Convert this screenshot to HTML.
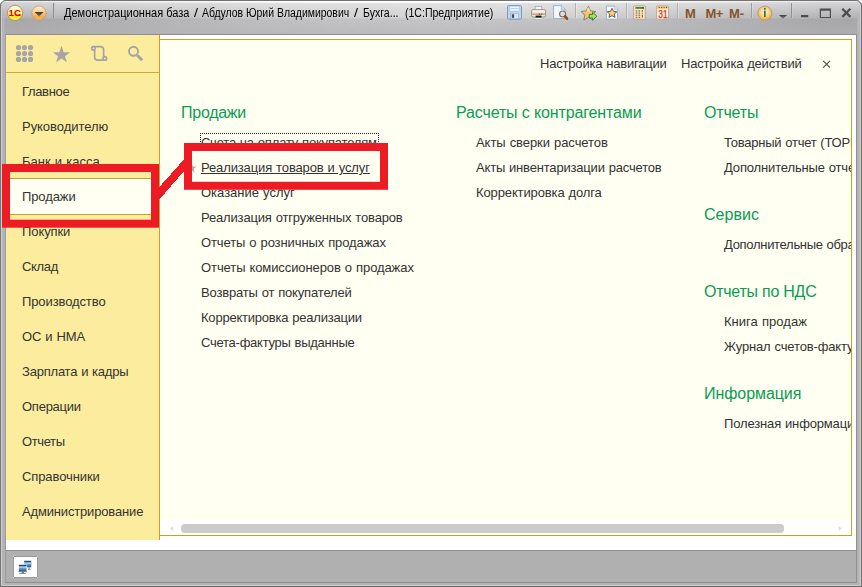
<!DOCTYPE html>
<html lang="ru">
<head>
<meta charset="utf-8">
<title>1С:Предприятие</title>
<style>
html,body{margin:0;padding:0;}
body{width:862px;height:587px;overflow:hidden;background:#fff;font-family:"Liberation Sans",sans-serif;position:relative;}
#win{position:absolute;left:0;top:0;width:862px;height:587px;overflow:hidden;background:#acacae;border-radius:6px 6px 0 0;}
#titlebar{position:absolute;left:0;top:0;width:862px;height:35px;
 background:linear-gradient(to bottom,#707072 0px,#707072 1px,#ececec 1px,#ececec 2px,#d6d6d8 2px,#b2b2b4 18px,#a7a7a9 19px,#adadaf 34px,#8e8e90 34px,#8e8e90 35px);}
#titlebar2{position:absolute;left:0;top:0;width:862px;height:35px;
 background:linear-gradient(to bottom,#7c7c7c 0px,#7c7c7c 1px,#ffffff 1px,#ffffff 3px,#e2e2e2 3px,#d3d3d3 18px,#c6c6c8 19px,#bcbcbe 34px,#8e8e90 34px,#8e8e90 35px);
 -webkit-mask-image:linear-gradient(to right,rgba(0,0,0,0) 10px,rgba(0,0,0,0.85) 300px,rgba(0,0,0,1) 450px,rgba(0,0,0,0.85) 600px,rgba(0,0,0,0) 830px);
 mask-image:linear-gradient(to right,rgba(0,0,0,0) 10px,rgba(0,0,0,0.85) 300px,rgba(0,0,0,1) 450px,rgba(0,0,0,0.85) 600px,rgba(0,0,0,0) 830px);}
.title{position:absolute;top:6px;font-size:12px;line-height:14px;color:#000;white-space:nowrap;transform-origin:0 0;}
#white{position:absolute;left:6px;top:35px;width:850px;height:515px;background:#fff;}
#side{position:absolute;left:6px;top:35px;width:153px;height:505px;background:#fcec9d;}
#sideline{position:absolute;left:6px;top:72px;width:153px;height:1px;background:#c8ad2e;}
#vline{position:absolute;left:159px;top:35px;width:1px;height:505px;background:#bfa524;}
#content{position:absolute;left:160px;top:39px;width:691px;height:495px;border:1px solid #bfa522;border-left:none;background:#fffff2;overflow:hidden;}
#clip{position:absolute;left:0;top:0;width:851px;height:520px;overflow:hidden;}
#scrollbg{position:absolute;left:160px;top:520px;width:691px;height:15px;background:#fff;}
#thumb{position:absolute;left:181px;top:524px;width:603px;height:9px;border-radius:4px;background:#cbcbcb;}
#status{position:absolute;left:6px;top:550px;width:850px;height:32px;background:#b0b0b0;border-top:1px solid #8f8f8f;box-sizing:border-box;}
.nav{position:absolute;left:22px;font-size:13px;line-height:16px;color:#343434;white-space:nowrap;word-spacing:0.5px;}
.h{position:absolute;font-size:16px;line-height:20px;color:#0a9c54;white-space:nowrap;}
.l{position:absolute;font-size:13px;line-height:16px;color:#333;white-space:nowrap;word-spacing:0.5px;}
#sel{position:absolute;left:6px;top:178px;width:153px;height:35px;background:#fffff2;border-top:1px solid #bfa522;border-bottom:1px solid #bfa522;}
.tb{position:absolute;font-weight:bold;font-size:13px;line-height:14px;color:#84532a;white-space:nowrap;}
#focus{position:absolute;left:200px;top:133px;width:177px;height:15px;border:1px dotted #222;}
/* frame edges */
.fe{position:absolute;}
svg{position:absolute;left:0;top:0;}
</style>
</head>
<body>
<div id="win">
  <div id="titlebar"></div>
  <div id="titlebar2"></div>
  <div class="title" style="left:64.2px;transform:scaleX(0.919)">Демонстрационная база</div>
  <div class="title" style="left:194.1px;transform:scaleX(1.2)">/</div>
  <div class="title" style="left:202.4px;transform:scaleX(0.870)">Абдулов Юрий Владимирович</div>
  <div class="title" style="left:354.2px;transform:scaleX(1.2)">/</div>
  <div class="title" style="left:362.6px;transform:scaleX(0.879)">Бухга...</div>
  <div class="title" style="left:405.3px;transform:scaleX(0.878)">(1С:Предприятие)</div>
  <div class="tb" style="left:685px;top:7px">M</div>
  <div class="tb" style="left:705.5px;top:7px;letter-spacing:-0.5px">M+</div>
  <div class="tb" style="left:729px;top:7px">M-</div>

  <div id="white"></div>
  <div id="side"></div>
  <div id="sideline"></div>
  <div id="sel"></div>
  <div id="vline"></div>

  <div id="content"></div>
  <div id="scrollbg"></div>
  <div id="thumb"></div>

  <!-- sidebar nav -->
  <div class="nav" style="top:84px;letter-spacing:-0.339px">Главное</div>
  <div class="nav" style="top:119px;letter-spacing:-0.045px">Руководителю</div>
  <div class="nav" style="top:154px;letter-spacing:0.013px">Банк и касса</div>
  <div class="nav" style="top:189px;letter-spacing:-0.1px">Продажи</div>
  <div class="nav" style="top:224px;letter-spacing:-0.087px">Покупки</div>
  <div class="nav" style="top:259px;letter-spacing:-0.325px">Склад</div>
  <div class="nav" style="top:294px;letter-spacing:-0.105px">Производство</div>
  <div class="nav" style="top:329px;letter-spacing:-0.109px">ОС и НМА</div>
  <div class="nav" style="top:364px;letter-spacing:-0.211px">Зарплата и кадры</div>
  <div class="nav" style="top:399px;letter-spacing:-0.252px">Операции</div>
  <div class="nav" style="top:434px;letter-spacing:-0.39px">Отчеты</div>
  <div class="nav" style="top:469px;letter-spacing:-0.097px">Справочники</div>
  <div class="nav" style="top:504px;letter-spacing:-0.163px">Администрирование</div>

  <div id="clip">
  <!-- top right commands -->
  <div class="l" style="left:540px;top:56px;letter-spacing:-0.192px">Настройка навигации</div>
  <div class="l" style="left:681px;top:56px;letter-spacing:-0.193px">Настройка действий</div>

  <!-- column 1 -->
  <div class="h" style="left:181px;top:103px;letter-spacing:-0.261px">Продажи</div>
  <div id="focus"></div>
  <div class="l" style="left:201px;top:135px;letter-spacing:-0.184px">Счета на оплату покупателям</div>
  <div class="l" style="left:201px;top:160px;text-decoration:underline;letter-spacing:-0.124px">Реализация товаров и услуг</div>
  <div class="l" style="left:201px;top:185px;letter-spacing:-0.009px">Оказание услуг</div>
  <div class="l" style="left:201px;top:210px;letter-spacing:-0.162px">Реализация отгруженных товаров</div>
  <div class="l" style="left:201px;top:235px;letter-spacing:-0.099px">Отчеты о розничных продажах</div>
  <div class="l" style="left:201px;top:260px;letter-spacing:-0.087px">Отчеты комиссионеров о продажах</div>
  <div class="l" style="left:201px;top:285px;letter-spacing:-0.17px">Возвраты от покупателей</div>
  <div class="l" style="left:201px;top:310px;letter-spacing:-0.213px">Корректировка реализации</div>
  <div class="l" style="left:201px;top:335px;letter-spacing:-0.254px">Счета-фактуры выданные</div>

  <!-- column 2 -->
  <div class="h" style="left:456px;top:103px;letter-spacing:-0.132px">Расчеты с контрагентами</div>
  <div class="l" style="left:476px;top:135px;letter-spacing:-0.057px">Акты сверки расчетов</div>
  <div class="l" style="left:476px;top:160px;letter-spacing:-0.181px">Акты инвентаризации расчетов</div>
  <div class="l" style="left:476px;top:185px;letter-spacing:-0.123px">Корректировка долга</div>

  <!-- column 3 -->
  <div class="h" style="left:704px;top:103px;letter-spacing:-0.169px">Отчеты</div>
  <div class="l" style="left:724px;top:135px;letter-spacing:-0.23px">Товарный отчет (ТОРГ-29)</div>
  <div class="l" style="left:724px;top:160px;letter-spacing:-0.15px">Дополнительные отчеты</div>
  <div class="h" style="left:704px;top:205px;letter-spacing:0.034px">Сервис</div>
  <div class="l" style="left:724px;top:237px;letter-spacing:-0.3px">Дополнительные обработки</div>
  <div class="h" style="left:704px;top:282px;letter-spacing:-0.246px">Отчеты по НДС</div>
  <div class="l" style="left:724px;top:314px;letter-spacing:0.029px">Книга продаж</div>
  <div class="l" style="left:724px;top:339px;letter-spacing:-0.15px">Журнал счетов-фактур</div>
  <div class="h" style="left:704px;top:384px;letter-spacing:-0.067px">Информация</div>
  <div class="l" style="left:724px;top:416px;letter-spacing:-0.15px">Полезная информация</div>
  </div>

  <div id="status"></div>

  <!-- frame edges -->
  <div class="fe" style="left:0;top:0;width:860px;height:12px;border:1px solid #727274;border-bottom:none;border-radius:6px 6px 0 0"></div>
  <div class="fe" style="left:0;top:0;width:1px;height:587px;background:#767676"></div>
  <div class="fe" style="left:1px;top:6px;width:1px;height:580px;background:#cfcfd1"></div>
  <div class="fe" style="left:2px;top:35px;width:3px;height:550px;background:#b4b4b6"></div>
  <div class="fe" style="left:5px;top:35px;width:1px;height:548px;background:#9a9a9e"></div>
  <div class="fe" style="left:856px;top:35px;width:1px;height:548px;background:#8e8e90"></div>
  <div class="fe" style="left:857px;top:35px;width:3px;height:550px;background:#b6b6b8"></div>
  <div class="fe" style="left:857px;top:6px;width:3px;height:29px;background:linear-gradient(to bottom,rgba(190,190,192,0),rgba(184,184,186,0.9) 14px,#b6b6b8)"></div>
  <div class="fe" style="left:2px;top:6px;width:3px;height:29px;background:linear-gradient(to bottom,rgba(190,190,192,0),rgba(184,184,186,0.6) 14px,#b4b4b6)"></div>
  <div class="fe" style="left:860px;top:6px;width:1px;height:580px;background:#cfcfd1"></div>
  <div class="fe" style="left:861px;top:0;width:1px;height:587px;background:#707070"></div>
  <div class="fe" style="left:5px;top:582px;width:852px;height:1px;background:#8e8e90"></div>
  <div class="fe" style="left:2px;top:583px;width:858px;height:2px;background:#b4b4b6"></div>
  <div class="fe" style="left:1px;top:585px;width:860px;height:1px;background:#cbcbcd"></div>
  <div class="fe" style="left:0;top:586px;width:862px;height:1px;background:#6a6a6a"></div>

  <svg width="862" height="587" viewBox="0 0 862 587">
    <defs>
      <linearGradient id="g1c" x1="0" y1="0" x2="0" y2="1">
        <stop offset="0" stop-color="#fffde6"/><stop offset="0.45" stop-color="#fff59a"/><stop offset="0.75" stop-color="#ffe818"/><stop offset="1" stop-color="#fff05a"/>
      </linearGradient>
      <linearGradient id="gor" x1="0" y1="0" x2="0" y2="1">
        <stop offset="0" stop-color="#fdf0d6"/><stop offset="0.45" stop-color="#f9cf8e"/><stop offset="0.8" stop-color="#f5a93c"/><stop offset="1" stop-color="#f9c26a"/>
      </linearGradient>
      <linearGradient id="gtri" x1="0" y1="0" x2="0" y2="1">
        <stop offset="0" stop-color="#3a3228"/><stop offset="1" stop-color="#85765e"/>
      </linearGradient>
      <radialGradient id="ginfo" cx="0.5" cy="0.42" r="0.6">
        <stop offset="0" stop-color="#fff6e2"/><stop offset="0.45" stop-color="#fbd89c"/><stop offset="1" stop-color="#f2a030"/>
      </radialGradient>
      <linearGradient id="garr" x1="0" y1="0" x2="0" y2="1">
        <stop offset="0" stop-color="#3c3c3e"/><stop offset="1" stop-color="#858587"/>
      </linearGradient>
      <linearGradient id="gmon" x1="0" y1="0" x2="0" y2="1">
        <stop offset="0" stop-color="#2f6fae"/><stop offset="0.4" stop-color="#a9cde9"/><stop offset="0.55" stop-color="#5f9bd0"/><stop offset="1" stop-color="#16559a"/>
      </linearGradient>
    </defs>
    <!-- 1C logo -->
    <circle cx="15" cy="12.9" r="7.6" fill="url(#g1c)" stroke="#b48c6c" stroke-width="0.9"/>
    <text x="8.6" y="16" font-family="Liberation Sans, sans-serif" font-weight="bold" font-size="8.6" fill="#e40000" textLength="12.4" lengthAdjust="spacingAndGlyphs">1С</text>
    <rect x="15.6" y="14.6" width="5" height="1.3" fill="#e40000"/>
    <!-- orange menu button -->
    <circle cx="38.9" cy="13" r="7.1" fill="url(#gor)" stroke="#c4a27a" stroke-width="0.9"/>
    <path d="M34.6 11.9 L43.6 11.9 L39.1 16.6 Z" fill="url(#gtri)"/>
    <!-- separators in title bar -->
    <g>
      <rect x="53" y="3" width="1" height="15" fill="#8e8e90"/><rect x="54" y="3" width="1" height="15" fill="#c8c8ca" opacity="0.6"/>
      <rect x="575" y="3" width="1" height="15" fill="#b2b2b4"/><rect x="576" y="3" width="1" height="15" fill="#f2f2f2" opacity="0.45"/>
      <rect x="626" y="3" width="1" height="15" fill="#b2b2b4"/><rect x="627" y="3" width="1" height="15" fill="#f2f2f2" opacity="0.45"/>
      <rect x="677" y="3" width="1" height="15" fill="#b0b0b2"/><rect x="678" y="3" width="1" height="15" fill="#eeeeee" opacity="0.45"/>
      <rect x="751" y="3" width="1" height="15" fill="#9d9d9f"/><rect x="752" y="3" width="1" height="15" fill="#e2e2e2" opacity="0.45"/>
      <rect x="791" y="3" width="1" height="15" fill="#919193"/><rect x="792" y="3" width="1" height="15" fill="#d4d4d4" opacity="0.45"/>
    </g>
    <!-- save (floppy) -->
    <g>
      <rect x="507.5" y="5.5" width="14" height="13.6" rx="1.2" fill="#bcd7f0" stroke="#6f93bd" stroke-width="0.9"/>
      <rect x="509.8" y="6.1" width="9.8" height="5" fill="#f0f7fd" stroke="#8fb3d9" stroke-width="0.5"/>
      <rect x="510.6" y="8.2" width="8.2" height="0.9" fill="#a9cbe6"/>
      <rect x="510.6" y="13.4" width="7.9" height="5.4" fill="#dde5ee" stroke="#8ea4be" stroke-width="0.5"/>
      <rect x="511.8" y="14.3" width="2.3" height="3.5" fill="#3e4a5c"/>
    </g>
    <!-- printer -->
    <g>
      <rect x="535.2" y="6.4" width="6.6" height="4.2" fill="#f1f6fb" stroke="#8b9fb8" stroke-width="0.7"/>
      <rect x="531.6" y="9.6" width="14" height="7.4" rx="1.6" fill="#efe4d4" stroke="#8e8276" stroke-width="0.8"/>
      <rect x="532.6" y="10.6" width="12" height="1.2" fill="#fbf8f2"/>
      <rect x="532.2" y="13.6" width="12.8" height="1.1" fill="#b58d6c"/>
      <rect x="538.8" y="13.5" width="1.3" height="1.3" fill="#e02020"/><rect x="541" y="13.5" width="1.3" height="1.3" fill="#2fa02f"/>
      <rect x="535.7" y="15.6" width="5.8" height="2.4" fill="#161616"/>
      <rect x="535.4" y="17.8" width="6.4" height="1.8" fill="#f6f6f6" stroke="#8a8a8a" stroke-width="0.4"/>
    </g>
    <!-- preview -->
    <g>
      <path d="M553.6 5.6 H561.3 L564.9 9.2 V18.6 H553.6 Z" fill="#f2f7fc" stroke="#7fa3cf" stroke-width="0.8"/>
      <path d="M561.3 5.6 V9.2 H564.9" fill="#d6e5f4" stroke="#7fa3cf" stroke-width="0.6"/>
      <circle cx="562.6" cy="14" r="3" fill="#cfe3f6" stroke="#9a643c" stroke-width="1.1"/>
      <path d="M565 16.4 L567 18.7" stroke="#8a4a22" stroke-width="2.6" stroke-linecap="round"/>
    </g>
    <!-- star with green arrow -->
    <g>
      <path d="M588.4 6.2 L590.6 10.9 L595.8 11.5 L591.9 15 L593 20.1 L588.4 17.4 L583.8 20.1 L584.9 15 L581 11.5 L586.2 10.9 Z" fill="#f8c46c" stroke="#86827c" stroke-width="1" stroke-linejoin="round"/>
      <path d="M587.2 8.6 L588.4 7.2 L589.6 8.6 L590 11.2 L586.6 11.4 Z" fill="#fde2b0" opacity="0.8"/>
      <path d="M589.2 14.4 H592.6 V12.2 L596.9 16.2 L592.6 20.2 V18 H589.2 Z" fill="#9fe074" stroke="#2c7c1e" stroke-width="0.9" stroke-linejoin="round"/>
    </g>
    <!-- star doc -->
    <g>
      <path d="M606.4 6.1 H614.4 L617.6 9.3 V19.2 H606.4 Z" fill="#f6fafe" stroke="#86a6cc" stroke-width="0.8"/>
      <path d="M614.4 6.1 V9.3 H617.6" fill="#dce9f6" stroke="#86a6cc" stroke-width="0.5"/>
      <path d="M612 8.3 L613.45 11.35 L616.8 11.75 L614.3 14 L615 17.3 L612 15.65 L609 17.3 L609.7 14 L607.2 11.75 L610.55 11.35 Z" fill="#f8d274" stroke="#55504a" stroke-width="0.9" stroke-linejoin="round"/>
    </g>
    <!-- calculator -->
    <g>
      <rect x="633.6" y="5.8" width="11.7" height="13.4" rx="0.8" fill="#fbe6bc" stroke="#a69c8c" stroke-width="0.8"/>
      <rect x="635.4" y="7" width="8.3" height="1.8" fill="#349034"/>
      <rect x="642.4" y="7" width="1.3" height="1.8" fill="#1d5c1d"/>
      <g fill="#4a4036">
        <rect x="635.7" y="10.5" width="1.6" height="0.9"/><rect x="638.5" y="10.5" width="1.6" height="0.9"/>
        <rect x="635.7" y="12.6" width="1.6" height="0.9"/><rect x="638.5" y="12.6" width="1.6" height="0.9"/><rect x="641.8" y="12.7" width="1" height="0.9"/>
        <rect x="635.7" y="14.7" width="1.6" height="0.9"/><rect x="638.5" y="14.7" width="1.6" height="0.9"/>
        <rect x="635.7" y="16.8" width="1.6" height="0.9"/><rect x="638.5" y="16.8" width="1.6" height="0.9"/>
      </g>
      <rect x="641.8" y="10" width="1" height="1.8" fill="#e03020"/>
      <rect x="641.8" y="14.6" width="1" height="3" fill="#6a5a3a"/>
    </g>
    <!-- calendar -->
    <g>
      <rect x="656.7" y="5.8" width="11.8" height="13.4" rx="0.8" fill="#fdf3dc" stroke="#a9a08e" stroke-width="0.8"/>
      <rect x="657.1" y="6.2" width="11" height="2.5" fill="#f6c068"/>
      <rect x="658.8" y="6.9" width="1" height="1" fill="#5a3e22"/><rect x="661.2" y="6.9" width="1" height="1" fill="#5a3e22"/><rect x="663.6" y="6.9" width="1" height="1" fill="#5a3e22"/><rect x="666" y="6.9" width="1" height="1" fill="#5a3e22"/>
      <text x="658.3" y="17.8" font-family="Liberation Sans, sans-serif" font-size="10" fill="#e2261a" stroke="#e2261a" stroke-width="0.25" textLength="9.3" lengthAdjust="spacingAndGlyphs">31</text>
    </g>
    <!-- info -->
    <g>
      <circle cx="764.8" cy="13.2" r="7.1" fill="url(#ginfo)" stroke="#b79a72" stroke-width="0.9"/>
      <rect x="764" y="10.6" width="1.7" height="6.4" fill="#2f7c16"/>
      <rect x="764" y="7.9" width="1.7" height="1.8" fill="#2f7c16"/>
    </g>
    <path d="M778.9 14.9 H787.1 L783 18.8 Z" fill="url(#garr)"/>
    <!-- window buttons -->
    <rect x="801" y="17.4" width="7.2" height="1" fill="#fff" opacity="0.45"/>
    <rect x="819.8" y="18.2" width="11.2" height="1" fill="#fff" opacity="0.45"/>
    <rect x="801" y="15" width="7.2" height="2.4" fill="#4e4e50"/>
    <path d="M819.8 8.5 H831 V18.2 H819.8 Z M821 10.7 V17 H829.8 V10.7 Z" fill="#4e4e50" fill-rule="evenodd"/>
    <path d="M842.3 8.8 L850.4 16.9 M850.4 8.8 L842.3 16.9" stroke="#4e4e50" stroke-width="2.3" fill="none"/>

    <!-- sidebar icons -->
    <g fill="#a6a6a7">
      <circle cx="18.5" cy="47.6" r="2.6"/><circle cx="24.5" cy="47.6" r="2.6"/><circle cx="30.5" cy="47.6" r="2.6"/>
      <circle cx="18.5" cy="53.5" r="2.6"/><circle cx="24.5" cy="53.5" r="2.6"/><circle cx="30.5" cy="53.5" r="2.6"/>
      <circle cx="18.5" cy="59.4" r="2.6"/><circle cx="24.5" cy="59.4" r="2.6"/><circle cx="30.5" cy="59.4" r="2.6"/>
      <path d="M61.5 45.8 L63.7 52.2 L70.2 52.3 L65 56.3 L66.9 62.2 L61.5 58.5 L56.1 62.2 L58 56.3 L52.8 52.3 L59.3 52.2 Z"/>
    </g>
    <g fill="none" stroke="#a4a4a6" stroke-width="1.7">
      <path d="M93.5 46.6 H100.5 Q103.6 46.6 103.6 49.8 V56.4"/>
      <path d="M94.6 50 V57 Q94.6 60.2 97.8 60.2 H104.6"/>
      <circle cx="93.4" cy="48.3" r="1.7" fill="#fcec9d"/>
      <circle cx="104.8" cy="58.4" r="1.8" fill="#fcec9d"/>
      <circle cx="133.5" cy="51.3" r="4.5" stroke-width="1.9"/>
    </g>
    <path d="M137.2 55.2 L142.2 60.2" stroke="#a4a4a6" stroke-width="3" stroke-linecap="butt"/>

    <!-- close x in content -->
    <path d="M823.2 60.8 L830 67.6 M830 60.8 L823.2 67.6" stroke="#4a4a4a" stroke-width="1.1" fill="none"/>
    <!-- scroll arrows -->
    <path d="M173.2 526 V531 L170 528.5 Z" fill="#dcdcdc"/>
    <path d="M838.6 526 V531 L841.8 528.5 Z" fill="#dcdcdc"/>
    <!-- small gray star left of selected link -->
    <path d="M191.60 163.00 L192.83 166.50 L196.55 166.59 L193.60 168.85 L194.66 172.41 L191.60 170.30 L188.54 172.41 L189.60 168.85 L186.65 166.59 L190.37 166.50 Z" fill="#ababab"/>

    <!-- status icon -->
    <g>
      <rect x="13.5" y="556.5" width="24" height="21" fill="#fdfdfd" stroke="#9b9b9b" stroke-width="1"/>
      <rect x="13" y="556" width="1" height="1" fill="#d2d2d2"/><rect x="37" y="556" width="1" height="1" fill="#d2d2d2"/>
      <rect x="13" y="577" width="1" height="1" fill="#d2d2d2"/><rect x="37" y="577" width="1" height="1" fill="#d2d2d2"/>
      <rect x="24.2" y="561" width="6.9" height="6.3" fill="url(#gmon)"/>
      <rect x="24.2" y="560.8" width="6.9" height="0.9" fill="#1b3a5c"/>
      <rect x="31.1" y="561.2" width="0.6" height="6.1" fill="#c9bcae"/>
      <rect x="28.4" y="567.3" width="1.4" height="2" fill="#8d8d8d"/><rect x="28" y="569.1" width="3" height="0.7" fill="#7a7a7a"/>
      <rect x="18.3" y="564.4" width="8.8" height="7" fill="#fdfdfd"/>
      <rect x="18.9" y="565" width="7.6" height="6.4" fill="url(#gmon)"/>
      <rect x="18.9" y="564.8" width="7.6" height="0.9" fill="#1b3a5c"/>
      <rect x="18.4" y="571.3" width="8.6" height="0.8" fill="#6e665e"/>
      <rect x="21.6" y="572.1" width="2.4" height="1.1" fill="#6a6a6a"/><rect x="19.2" y="573.2" width="6.8" height="0.7" fill="#6e6e6e"/>
    </g>

    <!-- red annotation -->
    <g fill="none" stroke="#ed1c24" stroke-width="8">
      <rect x="6" y="168" width="149" height="55.7"/>
      <rect x="188" y="147" width="196" height="38.8"/>
    </g>
    <path d="M158.5 188 L184.5 158.8 L184.5 170.6 L158.5 200.4 Z" fill="#ed1c24" shape-rendering="crispEdges"/>
  </svg>
</div>
</body>
</html>
